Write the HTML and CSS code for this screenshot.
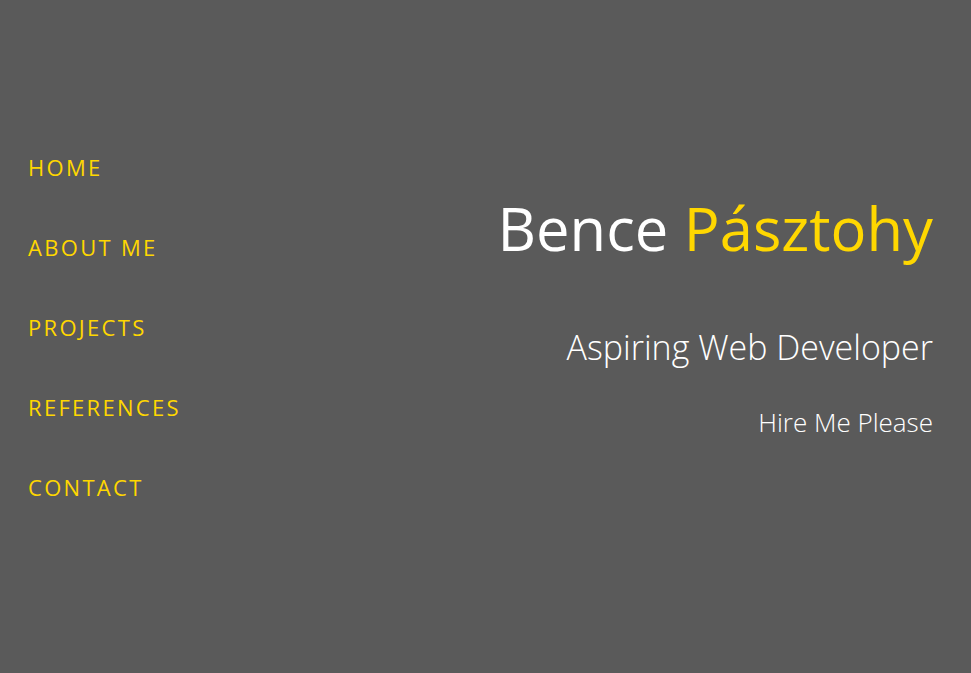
FILE: index.html
```html
<!DOCTYPE html>
<html lang="en">
<head>
<meta charset="utf-8">
<title>Bence Pásztohy</title>
<link rel="stylesheet" href="styles.css">
</head>
<body>
<div class="page">
  <nav class="nav">
    <a class="nav-link" href="#">HOME</a>
    <a class="nav-link" href="#">ABOUT ME</a>
    <a class="nav-link" href="#">PROJECTS</a>
    <a class="nav-link" href="#">REFERENCES</a>
    <a class="nav-link" href="#">CONTACT</a>
  </nav>
  <main class="hero">
    <h1 class="title">Bence <span class="accent">Pásztohy</span></h1>
    <h2 class="subtitle">Aspiring Web Developer</h2>
    <p class="tagline">Hire Me Please</p>
  </main>
</div>
</body>
</html>
```
FILE: styles.css
```css
html, body {
  margin: 0;
  padding: 0;
  height: 100%;
}
body {
  background: #5a5a5a;
  font-family: "Open Sans", "Noto Sans", sans-serif;
  color: #ffffff;
}
.page {
  display: flex;
  justify-content: space-between;
  height: 100%;
  box-sizing: border-box;
  padding: 0 38px 0 28px;
}
.nav {
  display: flex;
  flex-direction: column;
  padding-top: 153px;
  gap: 52px;
}
.nav-link {
  color: #ffd700;
  text-decoration: none;
  font-size: 22px;
  letter-spacing: 2.3px;
  line-height: 28px;
}
.hero {
  display: flex;
  flex-direction: column;
  align-items: flex-end;
  padding-top: 186px;
}
.title {
  margin: 0;
  font-weight: 400;
  font-size: 59.7px;
  line-height: 84px;
}
.accent {
  color: #ffd700;
}
.subtitle {
  margin: 55px 0 0;
  font-weight: 300;
  font-size: 34px;
  line-height: 44px;
}
.tagline {
  margin: 36px 0 0;
  font-weight: 300;
  font-size: 26px;
  line-height: 34px;
}
```
